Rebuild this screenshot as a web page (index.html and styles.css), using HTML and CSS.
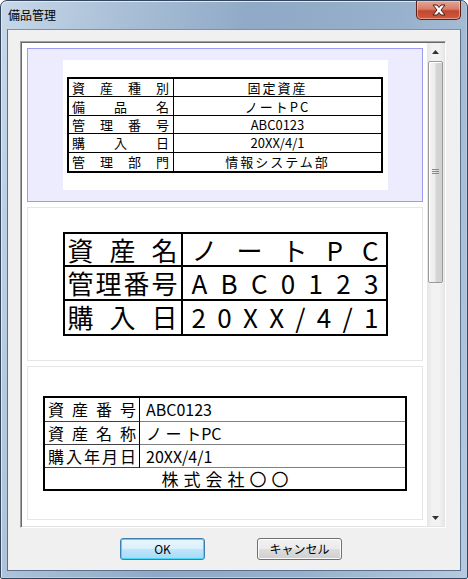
FILE: index.html
```html
<!DOCTYPE html>
<html lang="ja">
<head>
<meta charset="utf-8">
<link rel="stylesheet" href="styles.css">
</head>
<body>
<div class="window">
  <div class="titlebar">
    <span class="title">備品管理</span>
    <div class="close">
      <svg width="16" height="12" viewBox="0 0 16 12">
        <path d="M2 1 L6 1 L8 3.5 L10 1 L14 1 L10 6 L14 11 L10 11 L8 8.5 L6 11 L2 11 L6 6 Z" fill="#ffffff" stroke="#4a1a14" stroke-width="1" stroke-linejoin="round"/>
      </svg>
    </div>
  </div>
  <div class="client">
    <div class="listbox">
      <div class="items">
        <div class="item selected">
          <div class="pic">
            <div class="t1">
              <div class="lab"><span>資</span><span>産</span><span>種</span><span>別</span></div>
              <div class="val sp">固定資産</div>
              <div class="lab"><span>備</span><span>品</span><span>名</span></div>
              <div class="val sp">ノートPC</div>
              <div class="lab"><span>管</span><span>理</span><span>番</span><span>号</span></div>
              <div class="val">ABC0123</div>
              <div class="lab"><span>購</span><span>入</span><span>日</span></div>
              <div class="val">20XX/4/1</div>
              <div class="lab last"><span>管</span><span>理</span><span>部</span><span>門</span></div>
              <div class="val sp last">情報システム部</div>
            </div>
          </div>
        </div>
        <div class="item">
          <div class="t2">
            <div class="lab"><span>資</span><span>産</span><span>名</span></div>
            <div class="val"><span>ノ</span><span>ー</span><span>ト</span><span>P</span><span>C</span></div>
            <div class="lab"><span>管</span><span>理</span><span>番</span><span>号</span></div>
            <div class="val"><span>A</span><span>B</span><span>C</span><span>0</span><span>1</span><span>2</span><span>3</span></div>
            <div class="lab last"><span>購</span><span>入</span><span>日</span></div>
            <div class="val last"><span>2</span><span>0</span><span>X</span><span>X</span><span>/</span><span>4</span><span>/</span><span>1</span></div>
          </div>
        </div>
        <div class="item">
          <div class="t3">
            <div class="lab"><span>資</span><span>産</span><span>番</span><span>号</span></div>
            <div class="val">ABC0123</div>
            <div class="lab"><span>資</span><span>産</span><span>名</span><span>称</span></div>
            <div class="val">ノ ー トPC</div>
            <div class="lab"><span>購</span><span>入</span><span>年</span><span>月</span><span>日</span></div>
            <div class="val">20XX/4/1</div>
            <div class="company">株式会社〇〇</div>
          </div>
        </div>
      </div>
      <div class="scrollbar">
        <div class="arrow"><svg width="7" height="4" viewBox="0 0 7 4"><path d="M0 4 L3.5 0 L7 4 Z" fill="#333"/></svg></div>
        <div class="track">
          <div class="thumb">
            <svg width="7" height="6" viewBox="0 0 7 6"><path d="M0 0.5 H7 M0 2.5 H7 M0 4.5 H7" stroke="#8a8a8a" stroke-width="1"/></svg>
          </div>
        </div>
        <div class="arrow"><svg width="7" height="4" viewBox="0 0 7 4"><path d="M0 0 L7 0 L3.5 4 Z" fill="#333"/></svg></div>
      </div>
    </div>
    <div class="buttons">
      <button class="btn default">OK</button>
      <button class="btn">キャンセル</button>
    </div>
  </div>
</div>
</body>
</html>
```
FILE: styles.css
```css
html, body {
  margin: 0;
  padding: 0;
  background: #ffffff;
}
body {
  font-family: "Noto Sans CJK JP", "Noto Sans", sans-serif;
  width: 468px;
  height: 579px;
  overflow: hidden;
}
.window {
  box-sizing: border-box;
  width: 468px;
  height: 579px;
  border: 1px solid #34465e;
  border-radius: 7px 7px 2px 2px;
  background: linear-gradient(100deg, #c7d8e9 0%, #a9bfd6 22%, #8fa9c6 45%, #97b0cb 70%, #b6cadf 100%);
  display: flex;
  flex-direction: column;
  box-shadow: inset 1px 1px 0 #dfe9f3, inset -1px -1px 0 #b9cce0;
}
.titlebar {
  height: 28px;
  display: flex;
  justify-content: space-between;
  align-items: flex-start;
  flex: none;
}
.title {
  font-size: 12px;
  line-height: 14px;
  color: #000;
  margin: 7px 0 0 7px;
}
.close {
  width: 45px;
  height: 19px;
  margin-right: 6px;
  box-sizing: border-box;
  border: 1px solid #5b1f17;
  border-top: none;
  border-radius: 0 0 5px 5px;
  background: linear-gradient(#e6a493 0%, #d67e68 45%, #c4452e 55%, #cf5a3e 100%);
  box-shadow: inset 0 0 0 1px rgba(255, 220, 200, 0.5);
  display: flex;
  align-items: center;
  justify-content: center;
}
.client {
  flex: none;
  box-sizing: border-box;
  height: 542px;
  margin: 0 6px;
  background: #f0f0f0;
  border: 1px solid #5a708c;
  border-top-color: #7d91aa;
  display: flex;
  flex-direction: column;
  padding: 11px 0 0 12px;
}
.listbox {
  box-sizing: border-box;
  width: 426px;
  height: 487px;
  border: 1px solid;
  border-color: #a0a0a0 #ffffff #ffffff #a0a0a0;
  box-shadow: inset 1px 1px 0 #696969, inset -1px -1px 0 #e3e3e3;
  padding: 1px;
  background: #ffffff;
  display: flex;
}
.items {
  flex: 1;
  overflow: hidden;
  padding: 5px 4px 0 5px;
  display: flex;
  flex-direction: column;
  gap: 5px;
}
.item {
  flex: none;
  box-sizing: border-box;
  height: 154px;
  border: 1px solid #e6e6e6;
  background: #ffffff;
  display: flex;
  align-items: center;
  justify-content: center;
}
.item.selected {
  border-color: #9b9bf5;
  background: #ececfe;
}
.pic {
  width: 325px;
  height: 130px;
  background: #ffffff;
  display: flex;
  align-items: center;
  justify-content: center;
}

/* table 1 */
.t1 {
  box-sizing: border-box;
  width: 316px;
  height: 96px;
  border: 2px solid #000;
  display: grid;
  grid-template-columns: 105px 1fr;
  grid-template-rows: repeat(5, 1fr);
  font-size: 13px;
  line-height: 1;
  color: #000;
}
.t1 .lab, .t1 .val {
  border-bottom: 1px solid #000;
  display: flex;
  align-items: center;
}
.t1 .lab {
  border-right: 1px solid #000;
  justify-content: space-between;
  padding: 0 4px 0 3px;
}
.t1 .val {
  justify-content: center;
}
.t1 .sp {
  letter-spacing: 2px;
}
.t1 .last {
  border-bottom: none;
}

/* table 2 */
.t2 {
  box-sizing: border-box;
  width: 325px;
  height: 104px;
  border: 2px solid #000;
  display: grid;
  grid-template-columns: 118px 1fr;
  grid-template-rows: repeat(3, 1fr);
  font-size: 26px;
  font-weight: 400;
  line-height: 1;
  color: #000;
}
.t2 .lab, .t2 .val {
  border-bottom: 2px solid #000;
  display: flex;
  align-items: center;
  justify-content: space-between;
}
.t2 .lab {
  border-right: 2px solid #000;
  padding: 0 3px 0 3px;
}
.t2 .val {
  padding: 0 7px 0 9px;
}
.t2 .last {
  border-bottom: none;
}

/* table 3 */
.t3 {
  box-sizing: border-box;
  width: 364px;
  height: 95px;
  border: 2px solid #000;
  display: grid;
  grid-template-columns: 95px 1fr;
  grid-template-rows: 24px 23px 23px 1fr;
  font-size: 16px;
  line-height: 1;
  color: #000;
}
.t3 .lab, .t3 .val {
  display: flex;
  align-items: center;
}
.t3 .lab {
  border-right: 1px solid #000;
  border-bottom: 1px solid #404040;
  justify-content: space-between;
  padding: 0 3px 0 3px;
}
.t3 .val {
  border-bottom: 1px solid #808080;
  padding-left: 6px;
}
.t3 .company {
  grid-column: 1 / 3;
  display: flex;
  align-items: center;
  justify-content: center;
  font-size: 17px;
  letter-spacing: 5px;
  padding-left: 5px;
}

/* scrollbar */
.scrollbar {
  width: 17px;
  flex: none;
  display: flex;
  flex-direction: column;
  background: linear-gradient(90deg, #e6e6e6, #f2f2f2 30%, #f2f2f2 70%, #e8e8e8);
}
.arrow {
  height: 17px;
  flex: none;
  display: flex;
  align-items: center;
  justify-content: center;
}
.track {
  flex: 1;
  padding-top: 1px;
}
.thumb {
  box-sizing: border-box;
  height: 222px;
  margin: 0 1px;
  border: 1px solid #9a9a9a;
  border-radius: 2px;
  background: linear-gradient(90deg, #f4f4f4 0%, #ececec 45%, #d6d6d6 55%, #d0d0d0 100%);
  box-shadow: inset 1px 1px 0 #ffffff;
  display: flex;
  align-items: center;
  justify-content: center;
}

/* buttons */
.buttons {
  display: flex;
  gap: 52px;
  margin-top: 10px;
  padding-left: 100px;
}
.btn {
  box-sizing: border-box;
  width: 85px;
  height: 22px;
  border: 1px solid #707070;
  border-radius: 3px;
  background: linear-gradient(#f2f2f2 0%, #ebebeb 50%, #dddddd 51%, #cfcfcf 100%);
  box-shadow: inset 0 0 0 1px #fcfcfc;
  font-family: "Noto Sans CJK JP", "Noto Sans", sans-serif;
  font-size: 12px;
  line-height: 1;
  color: #000;
  padding: 0;
}
.btn.default {
  border-color: #3c7fb1;
  background: linear-gradient(#eaf6fd 0%, #d9f0fc 50%, #bee6fd 51%, #a7d9f5 100%);
  box-shadow: inset 0 0 0 1px #48d6fb;
}
```
